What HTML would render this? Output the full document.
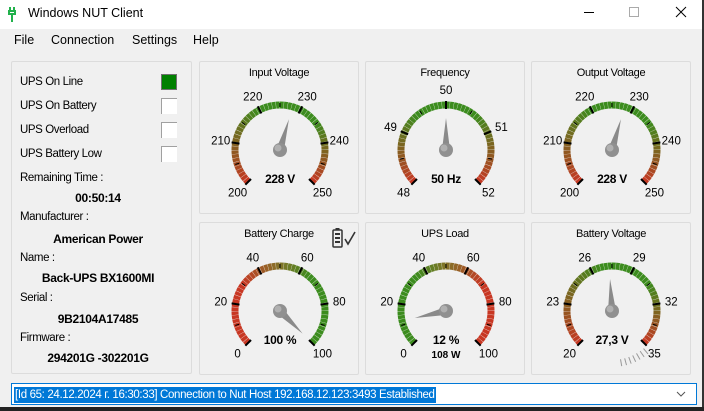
<!DOCTYPE html>
<html><head><meta charset="utf-8"><style>
*{margin:0;padding:0;box-sizing:border-box}
body{width:704px;height:411px;overflow:hidden;background:#f0f0f0;font-family:"Liberation Sans",sans-serif;color:#000;position:relative}
.abs{position:absolute}
#title{left:0;top:0;width:704px;height:29px;background:#fff}
#title .t{left:28px;top:6px;font-size:12.5px}
.menu{top:33px;font-size:12.5px}
.panel{position:absolute;border:1px solid #dcdcdc;border-radius:2px}
.lbl{position:absolute;left:20px;font-size:11.5px;letter-spacing:-0.4px}
.val{position:absolute;left:12px;width:172px;text-align:center;font-size:12px;font-weight:bold;letter-spacing:-0.3px}
.cb{position:absolute;left:161px;width:16px;height:16px;background:#fff;border-top:1px solid #a0a0a0;border-left:1px solid #a0a0a0}
svg text{font-family:"Liberation Sans",sans-serif}
#combo{left:11px;top:383px;width:686px;height:22px;border:1px solid #0078d7;background:#fff}
#combo span{position:absolute;left:2px;top:3px;background:#0078d7;color:#fff;font-size:11.5px;letter-spacing:-0.35px;padding:1px 1px;height:16px;line-height:14px}
</style></head><body>
<div id="title" class="abs">
<svg class="abs" style="left:8px;top:7px" width="10" height="16" viewBox="0 0 10 16"><path d="M2 0v4M6 0v4M1 4h6v3h-6zM4 7v8" stroke="#22b14c" stroke-width="2" fill="none"/></svg>
<div class="abs t">Windows NUT Client</div>
<div class="abs" style="left:584px;top:12px;width:10px;height:1px;background:#000"></div>
<div class="abs" style="left:629px;top:7px;width:10px;height:10px;border:1px solid #aaa"></div>
<svg class="abs" style="left:675px;top:6px" width="12" height="12"><path d="M1 1L11 11M11 1L1 11" stroke="#000" stroke-width="1"/></svg>
</div>
<div class="abs" style="left:702px;top:0;width:2px;height:411px;background:#333"></div>
<div class="abs menu" style="left:14px">File</div>
<div class="abs menu" style="left:51px">Connection</div>
<div class="abs menu" style="left:132px">Settings</div>
<div class="abs menu" style="left:193px">Help</div>

<div class="panel" style="left:11px;top:61px;width:181px;height:313px"></div>
<div class="lbl" style="top:76px">UPS On Line</div>
<div class="lbl" style="top:100px">UPS On Battery</div>
<div class="lbl" style="top:124px">UPS Overload</div>
<div class="lbl" style="top:148px">UPS Battery Low</div>
<div class="cb" style="top:74px;background:#008000;border:1px solid #707070"></div>
<div class="cb" style="top:98px"></div>
<div class="cb" style="top:122px"></div>
<div class="cb" style="top:146px"></div>
<div class="lbl" style="top:172px">Remaining Time :</div>
<div class="val" style="top:191px">00:50:14</div>
<div class="lbl" style="top:211px">Manufacturer :</div>
<div class="val" style="top:232px">American Power</div>
<div class="lbl" style="top:252px">Name :</div>
<div class="val" style="top:271px">Back-UPS BX1600MI</div>
<div class="lbl" style="top:292px">Serial :</div>
<div class="val" style="top:312px">9B2104A17485</div>
<div class="lbl" style="top:332px">Firmware :</div>
<div class="val" style="top:351px">294201G -302201G</div>

<div id="gauges"></div>
<svg class="abs" style="left:331px;top:227px" width="26" height="22"><rect x="2" y="3" width="9" height="17" rx="1" fill="none" stroke="#333" stroke-width="1.5"/><rect x="4.5" y="1" width="4" height="2" fill="#333"/><rect x="4" y="6" width="5" height="2" fill="#333"/><rect x="4" y="10" width="5" height="2" fill="#333"/><rect x="4" y="14" width="5" height="2" fill="#333"/><path d="M14 12l3 5 7-12" stroke="#333" stroke-width="1.6" fill="none"/></svg>

<div id="combo" class="abs"><span>[Id 65: 24.12.2024 г. 16:30:33] Connection to Nut Host 192.168.12.123:3493 Established</span>
<svg class="abs" style="left:664px;top:7px" width="10" height="6"><path d="M1 1l4 4 4-4" stroke="#555" fill="none"/></svg></div>
<div class="abs" style="left:0;top:407px;width:704px;height:4px;background:#222"></div>

<script>
var R=[200,55,35],G=[60,140,30],O=[130,115,40];
var gs=[
 {x:199,y:61,t:"Input Voltage",labs:["200","210","220","230","240","250"],v:0.56,stops:[[0,R],[0.4,G],[0.7,G],[1,R]],val:"228 V"},
 {x:365,y:61,t:"Frequency",labs:["48","49","50","51","52"],v:0.5,stops:[[0,R],[0.35,G],[0.65,G],[1,R]],val:"50 Hz"},
 {x:531,y:61,t:"Output Voltage",labs:["200","210","220","230","240","250"],v:0.56,stops:[[0,R],[0.4,G],[0.7,G],[1,R]],val:"228 V"},
 {x:199,y:222,t:"Battery Charge",labs:["0","20","40","60","80","100"],v:1,stops:[[0,R],[0.3,R],[0.5,O],[0.65,G],[1,G]],val:"100 %"},
 {x:365,y:222,t:"UPS Load",labs:["0","20","40","60","80","100"],v:0.12,stops:[[0,G],[0.35,G],[0.5,O],[0.7,R],[1,R]],val:"12 %",val2:"108 W"},
 {x:531,y:222,t:"Battery Voltage",labs:["20","23","26","29","32","35"],v:0.487,stops:[[0,R],[0.45,G],[0.7,G],[1,R]],val:"27,3 V",hatch:1}
];
function col(st,f){for(var i=1;i<st.length;i++){if(f<=st[i][0]){var a=st[i-1],b=st[i],k=(f-a[0])/(b[0]-a[0]||1);return "rgb("+[0,1,2].map(function(j){return Math.round(a[1][j]+(b[1][j]-a[1][j])*k)}).join(",")+")";}}return "rgb("+st[st.length-1][1].join(",")+")";}
var h="";
gs.forEach(function(g){
 var cx=81,cy=89,s='<div class="panel" style="left:'+g.x+'px;top:'+g.y+'px;width:160px;height:153px"></div><svg class="abs" style="left:'+g.x+'px;top:'+g.y+'px" width="160" height="153">';
 s+='<text x="80" y="15" font-size="11" text-anchor="middle" letter-spacing="-0.3">'+g.t+'</text>';
 function P(a,r){var rad=a*Math.PI/180;return [cx+r*Math.cos(rad),cy-r*Math.sin(rad)];}
 var N=54;
 for(var i=0;i<N;i++){var f0=i/N,f1=(i+0.92)/N,a0=225-270*f0,a1=225-270*f1;var p0=P(a0,45),p1=P(a1,45);
  s+='<path d="M'+p0[0].toFixed(2)+' '+p0[1].toFixed(2)+'A45 45 0 0 1 '+p1[0].toFixed(2)+' '+p1[1].toFixed(2)+'" stroke="'+col(g.stops,(i+0.5)/N)+'" stroke-width="7" fill="none"/>';}
 var n=g.labs.length-1;
 for(var i=0;i<=n*2;i++){var a=225-270*i/(n*2);var maj=i%2==0;var q0=P(a,maj?41:43),q1=P(a,maj?49:47);
  s+='<line x1="'+q0[0]+'" y1="'+q0[1]+'" x2="'+q1[0]+'" y2="'+q1[1]+'" stroke="#000" stroke-width="'+(maj?2:1)+'"/>';
  if(maj){var l=P(a,60);s+='<text x="'+l[0]+'" y="'+(l[1]+4)+'" font-size="11.5" text-anchor="middle">'+g.labs[i/2]+'</text>';}}
 if(g.hatch){for(var k=0;k<7;k++){var a=-50-k*5;var q0=P(a,49),q1=P(a,56);s+='<line x1="'+q0[0]+'" y1="'+q0[1]+'" x2="'+q1[0]+'" y2="'+q1[1]+'" stroke="#999" stroke-width="1"/>';}}
 var na=225-270*g.v,tip=P(na,32),b1=P(na+90,4),b2=P(na-90,4);
 s+='<path d="M'+b1[0]+' '+b1[1]+'L'+tip[0]+' '+tip[1]+'L'+b2[0]+' '+b2[1]+'Z" fill="#8a8a8a"/>';
 s+='<circle cx="'+cx+'" cy="'+cy+'" r="7" fill="#909090"/><circle cx="'+(cx-2)+'" cy="'+(cy-2)+'" r="3.5" fill="#b0b0b0"/>';
 s+='<text x="'+cx+'" y="'+(cy+33)+'" font-size="12" font-weight="bold" text-anchor="middle" letter-spacing="-0.3">'+g.val+'</text>';
 if(g.val2)s+='<text x="'+cx+'" y="'+(cy+47)+'" font-size="10" font-weight="bold" text-anchor="middle">'+g.val2+'</text>';
 h+=s+'</svg>';
});
document.getElementById("gauges").innerHTML=h;
</script>
</body></html>
